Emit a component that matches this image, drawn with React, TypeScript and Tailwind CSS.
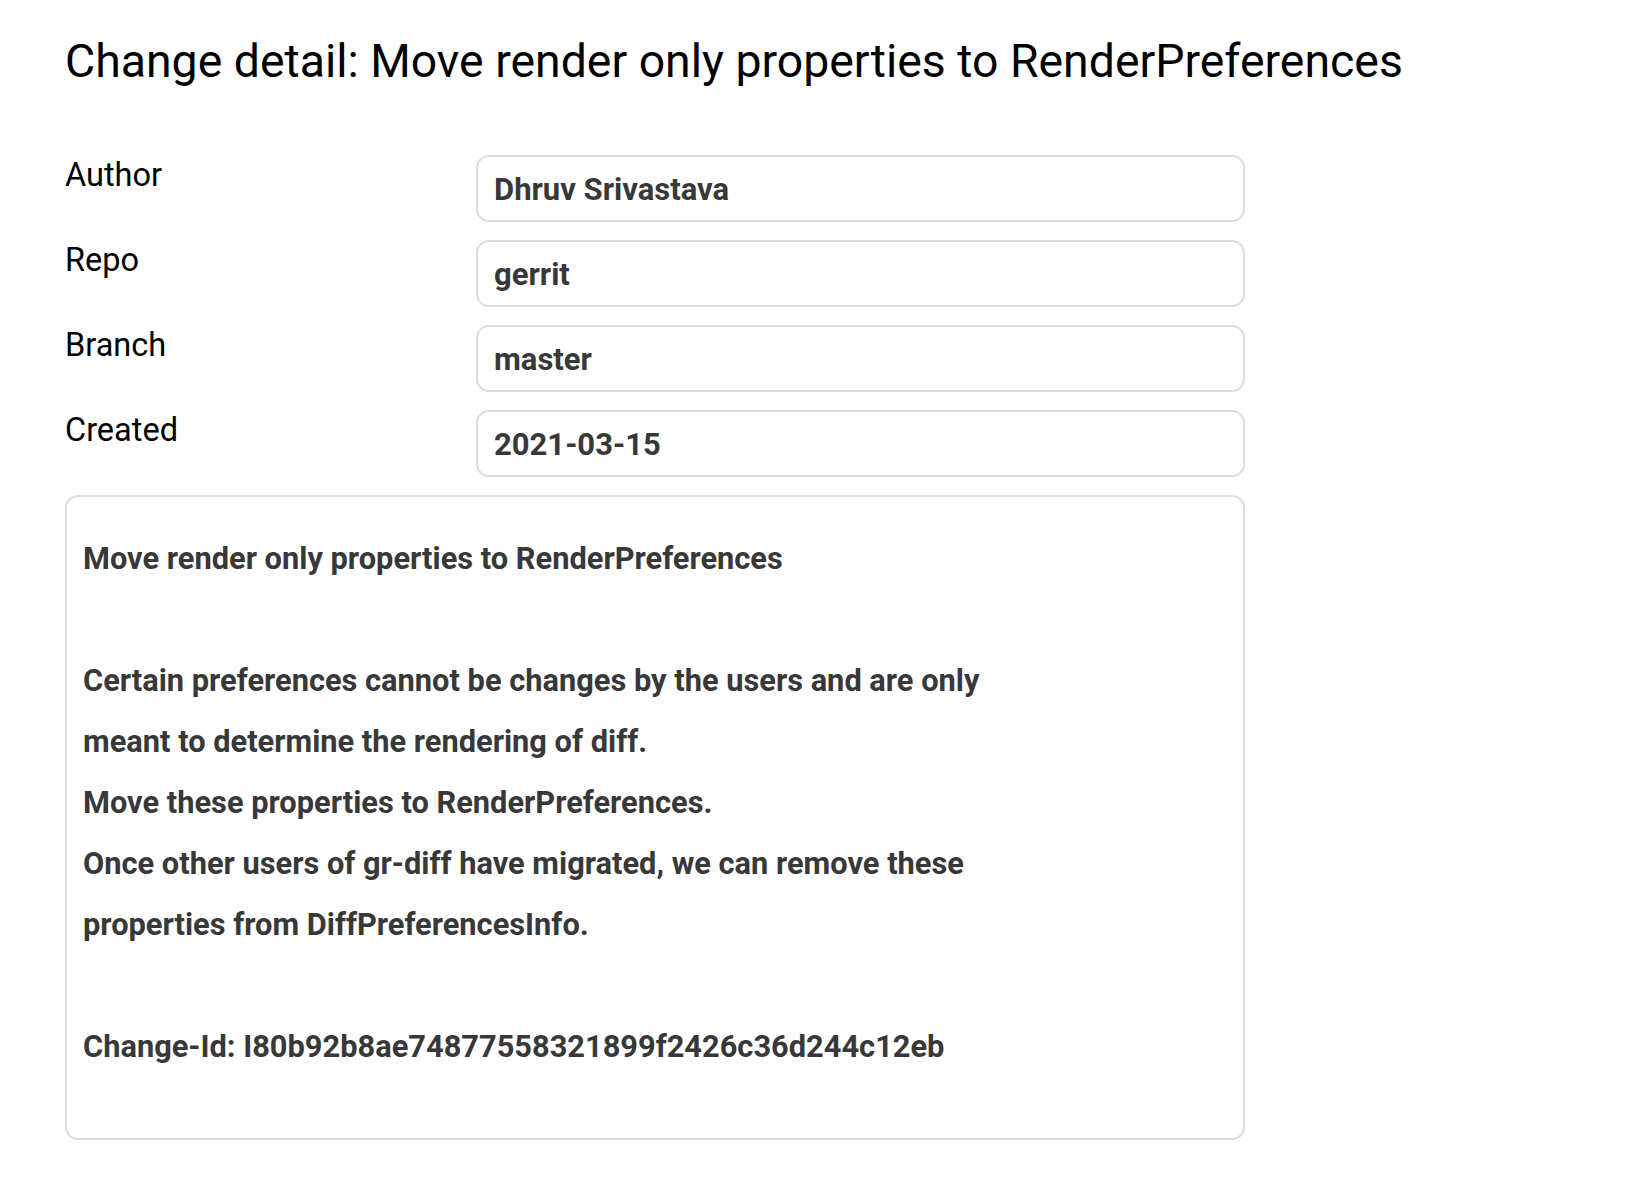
import React from 'react';

type Field = { label: string; value: string };

const fields: Field[] = [
  { label: 'Author', value: 'Dhruv Srivastava' },
  { label: 'Repo', value: 'gerrit' },
  { label: 'Branch', value: 'master' },
  { label: 'Created', value: '2021-03-15' },
];

const messageLines = [
  'Move render only properties to RenderPreferences',
  '',
  'Certain preferences cannot be changes by the users and are only',
  'meant to determine the rendering of diff.',
  'Move these properties to RenderPreferences.',
  'Once other users of gr-diff have migrated, we can remove these',
  'properties from DiffPreferencesInfo.',
  '',
  'Change-Id: I80b92b8ae74877558321899f2426c36d244c12eb',
];

const FieldRow: React.FC<Field> = ({ label, value }) => {
  return (
    <>
      <div className="text-[32.5px] leading-[38px] text-black pt-[1px]">{label}</div>
      <div className="h-[67px] flex items-center px-4 pt-[3px] border-2 border-[#dddddd] rounded-[13px] bg-white">
        <span className="text-[31px] font-bold text-[#383838]">{value}</span>
      </div>
    </>
  );
};

const App: React.FC = () => {
  return (
    <div className="min-h-[1184px] bg-white px-[65px] pt-[34px] font-['Roboto',sans-serif]">
      <h1 className="text-[46.4px] leading-[55px] text-black font-normal">
        Change detail: Move render only properties to RenderPreferences
      </h1>

      <div className="w-[1180px] mt-[66px] grid grid-cols-[411px_1fr] gap-y-[18px]">
        {fields.map((f) => (
          <FieldRow key={f.label} {...f} />
        ))}
        <div className="col-span-2 h-[645px] border-2 border-[#dddddd] rounded-[13px] px-4 pt-[31px]">
          {messageLines.map((line, i) => (
            <div
              key={i}
              className="text-[30.8px] leading-[61px] h-[61px] font-bold text-[#383838] whitespace-nowrap"
            >
              {line}
            </div>
          ))}
        </div>
      </div>
    </div>
  );
};

export default App;
